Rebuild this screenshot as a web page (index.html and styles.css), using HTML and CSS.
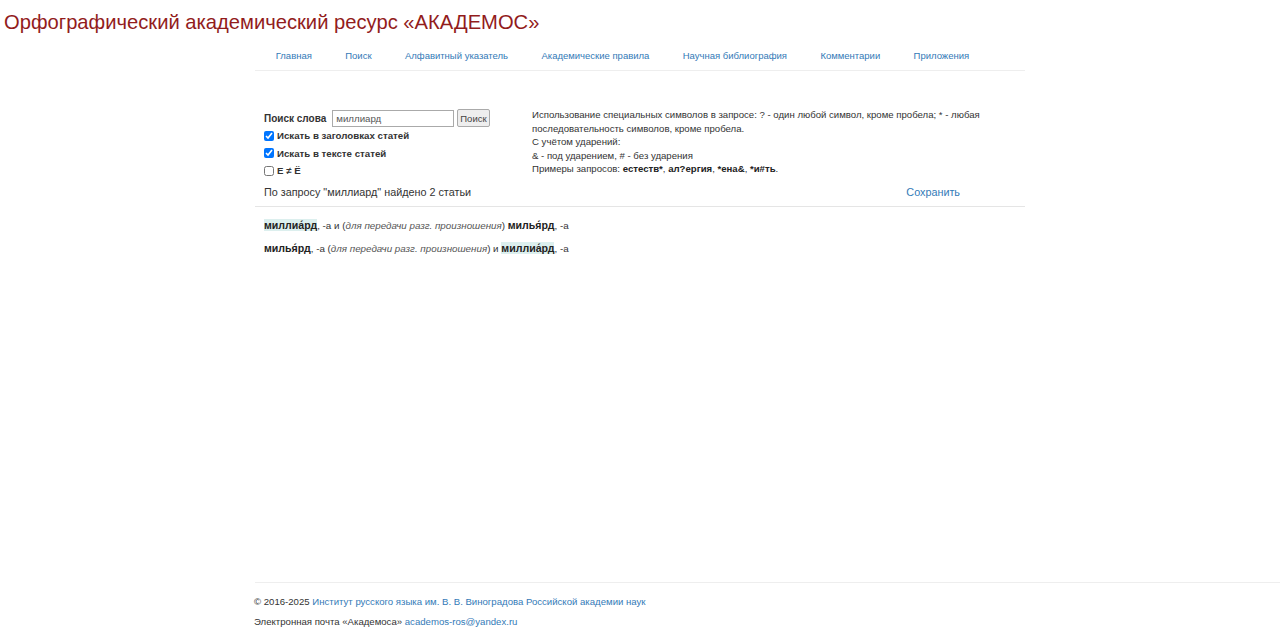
FILE: index.html
```html
<!DOCTYPE html>
<html lang="ru">
<head>
    <meta charset="UTF-8">
    <meta name="viewport" content="width=device-width, initial-scale=1.0">
    <title>Орфографический академический ресурс «АКАДЕМОС»</title>
    <link rel="stylesheet" href="styles.css">
</head>
<body>
    <h1 class="site-title">Орфографический академический ресурс «АКАДЕМОС»</h1>
    <div class="container">
        <ul class="menu">
            <li><a href="#">Главная</a></li>
            <li><a href="#">Поиск</a></li>
            <li><a href="#">Алфавитный указатель</a></li>
            <li><a href="#">Академические правила</a></li>
            <li><a href="#">Научная библиография</a></li>
            <li><a href="#">Комментарии</a></li>
            <li><a href="#">Приложения</a></li>
        </ul>
        <div class="search-block">
            <form class="search-form">
                <div class="search-row">
                    <label for="word" class="search-label">Поиск слова</label>
                    <input type="text" id="word" name="word" value="миллиард">
                    <button type="submit">Поиск</button>
                </div>
                <label class="check"><input type="checkbox" checked> Искать в заголовках статей</label>
                <label class="check"><input type="checkbox" checked> Искать в тексте статей</label>
                <label class="check"><input type="checkbox"> Е ≠ Ё</label>
            </form>
            <div class="search-help">
                Использование специальных символов в запросе: ? - один любой символ, кроме пробела; * - любая последовательность символов, кроме пробела.<br>
                С учётом ударений:<br>
                &amp; - под ударением, # - без ударения<br>
                Примеры запросов: <b>естеств*</b>, <b>ал?ергия</b>, <b>*ена&amp;</b>, <b>*и#ть</b>.
            </div>
        </div>
        <div class="result-head">
            <span>По запросу "миллиард" найдено 2 статьи</span>
            <a href="#">Сохранить</a>
        </div>
        <div class="entries">
            <p><b class="hl">миллиа́рд</b>, -а и (<i>для передачи разг. произношения</i>) <b>милья́рд</b>, -а</p>
            <p><b>милья́рд</b>, -а (<i>для передачи разг. произношения</i>) и <b class="hl">миллиа́рд</b>, -а</p>
        </div>
    </div>
    <footer class="footer">
        <p>© 2016-2025 <a href="#">Институт русского языка им. В. В. Виноградова Российской академии наук</a></p>
        <p>Электронная почта «Академоса» <a href="#">academos-ros@yandex.ru</a></p>
    </footer>
</body>
</html>
```

FILE: styles.css
```css
body {
    font-family: "Liberation Sans", Arial, sans-serif;
    font-size: 10px;
    color: #333;
    margin: 0;
    min-height: 100vh;
    display: flex;
    flex-direction: column;
}
a {
    color: #337ab7;
    text-decoration: none;
}
.site-title {
    margin: 0;
    padding: 10px 0 0 4px;
    font-size: 20.2px;
    line-height: 24px;
    font-weight: normal;
    color: #921c1c;
}
.container {
    width: 770px;
    margin: 0 auto;
}
.menu {
    list-style: none;
    display: flex;
    margin: 8px 0 0;
    padding: 0 0 0 4px;
    border-bottom: 1px solid #eee;
}
.menu a {
    display: block;
    padding: 7px 16.7px;
    line-height: 14px;
    font-size: 9.5px;
    white-space: nowrap;
}
.search-block {
    display: flex;
    margin-top: 38px;
}
.search-form {
    width: 268px;
    padding-left: 9px;
}
.search-row {
    display: flex;
    align-items: center;
    height: 18px;
}
.search-label {
    font-weight: bold;
    font-size: 10px;
    margin-right: 6px;
}
.search-row input {
    width: 122px;
    height: 17px;
    box-sizing: border-box;
    border: 1px solid #aaa;
    padding: 0 3px;
    font-family: inherit;
    font-size: 9.7px;
    color: #555;
}
.search-row button {
    height: 18px;
    margin-left: 3px;
    padding: 0 2px;
    border: 1px solid #aaa;
    border-radius: 2px;
    background-color: #eee;
    font-family: inherit;
    font-size: 9.5px;
    color: #444;
}
.check {
    display: flex;
    align-items: center;
    height: 17.5px;
    font-weight: bold;
    font-size: 9.7px;
}
.check input {
    width: 10px;
    height: 10px;
    margin: 0 3px 0 0;
}
.search-help {
    width: 460px;
    font-size: 9.6px;
    line-height: 13.5px;
    margin-top: -1px;
}
.search-help b {
    color: #222;
}
.result-head {
    display: flex;
    justify-content: space-between;
    padding: 5.5px 65px 7px 9px;
    font-size: 10.8px;
    line-height: 14px;
    border-bottom: 1px solid #e5e5e5;
}
.entries {
    padding: 7px 9px;
}
.entries p {
    margin: 0;
    line-height: 22px;
    font-size: 9.8px;
}
.entries b {
    font-size: 10.6px;
    color: #222;
}
.entries i {
    color: #555;
}
.hl {
    background-color: #dcefee;
}
.footer {
    margin: auto 0 0 255px;
    border-top: 1px solid #eee;
    padding: 13px 0 0;
    font-size: 9.6px;
}
.footer p {
    margin: 0 0 8px -1px;
    line-height: 12px;
}
.footer p:last-child {
    margin-bottom: 0;
}
```
